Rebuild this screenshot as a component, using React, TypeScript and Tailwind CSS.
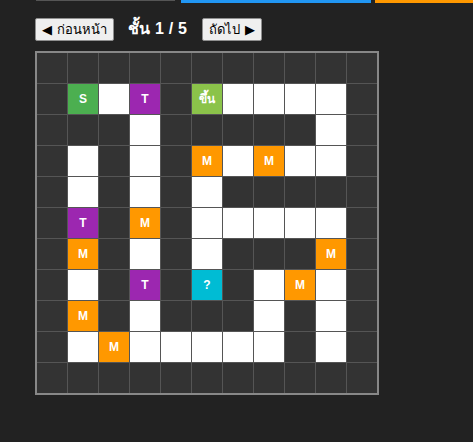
import React from "react";

type Cell = "." | "W" | "S" | "T" | "U" | "M" | "Q";

// Level map: . wall, W path, S start, T teleport, U stairs up, M monster, Q mystery
const LEVEL: string[] = [
  "...........",
  ".SWT.UWWWW.",
  "...W.....W.",
  ".W.W.MWMWW.",
  ".W.W.W.....",
  ".T.M.WWWWW.",
  ".M.W.W...M.",
  ".W.T.Q.WMW.",
  ".M.W...W.W.",
  ".WMWWWWW.W.",
  "...........",
];

const cellStyle: Record<Cell, string> = {
  ".": "bg-[#333333]",
  W: "bg-white",
  S: "bg-[#4caf50]",
  T: "bg-[#9c27b0]",
  U: "bg-[#8bc34a]",
  M: "bg-[#ff9800]",
  Q: "bg-[#00bcd4]",
};

const cellLabel: Record<Cell, string> = {
  ".": "",
  W: "",
  S: "S",
  T: "T",
  U: "ขึ้น",
  M: "M",
  Q: "?",
};

function Tile({ kind }: { kind: Cell }) {
  return (
    <div
      className={`flex h-[30px] w-[30px] items-center justify-center text-[12px] font-bold leading-none text-white ${cellStyle[kind]}`}
    >
      {cellLabel[kind]}
    </div>
  );
}

function NavButton({ children }: { children: React.ReactNode }) {
  return (
    <button className="flex h-[23px] items-center rounded-[2px] border border-[#8f8f8f] bg-[#efefef] px-[6px] text-[13px] leading-none text-black">
      {children}
    </button>
  );
}

export default function App() {
  return (
    <div
      className="min-h-screen w-full bg-[#222222]"
      style={{ fontFamily: '"Liberation Sans", Arial, sans-serif' }}
    >
      {/* tab strip edges */}
      <div className="flex items-start">
        <div className="ml-[36px] h-[1px] w-[139px] bg-[#555555]" />
        <div className="ml-[6px] h-[3px] w-[190px] bg-[#2196f3]" />
        <div className="ml-[4px] h-[3px] flex-1 bg-[#ff9800]" />
      </div>

      <div className="pl-[35px]">
        <div className="mt-[14px] flex items-center">
          <NavButton>
            <span className="mr-[5px] text-[13px]">◀</span>ก่อนหน้า
          </NavButton>
          <span className="ml-[14px] w-[59px] whitespace-nowrap text-[16px] font-bold tracking-[0.2px] text-white">
            ชั้น 1 / 5
          </span>
          <div className="ml-[15px]">
            <NavButton>
              ถัดไป<span className="ml-[5px] text-[13px]">▶</span>
            </NavButton>
          </div>
        </div>

        <div className="mt-[10px] inline-grid grid-cols-[repeat(11,30px)] gap-px border-2 border-[#888888] bg-[#555555]">
          {LEVEL.flatMap((row, r) =>
            row.split("").map((ch, c) => <Tile key={`${r}-${c}`} kind={ch as Cell} />)
          )}
        </div>
      </div>
    </div>
  );
}
